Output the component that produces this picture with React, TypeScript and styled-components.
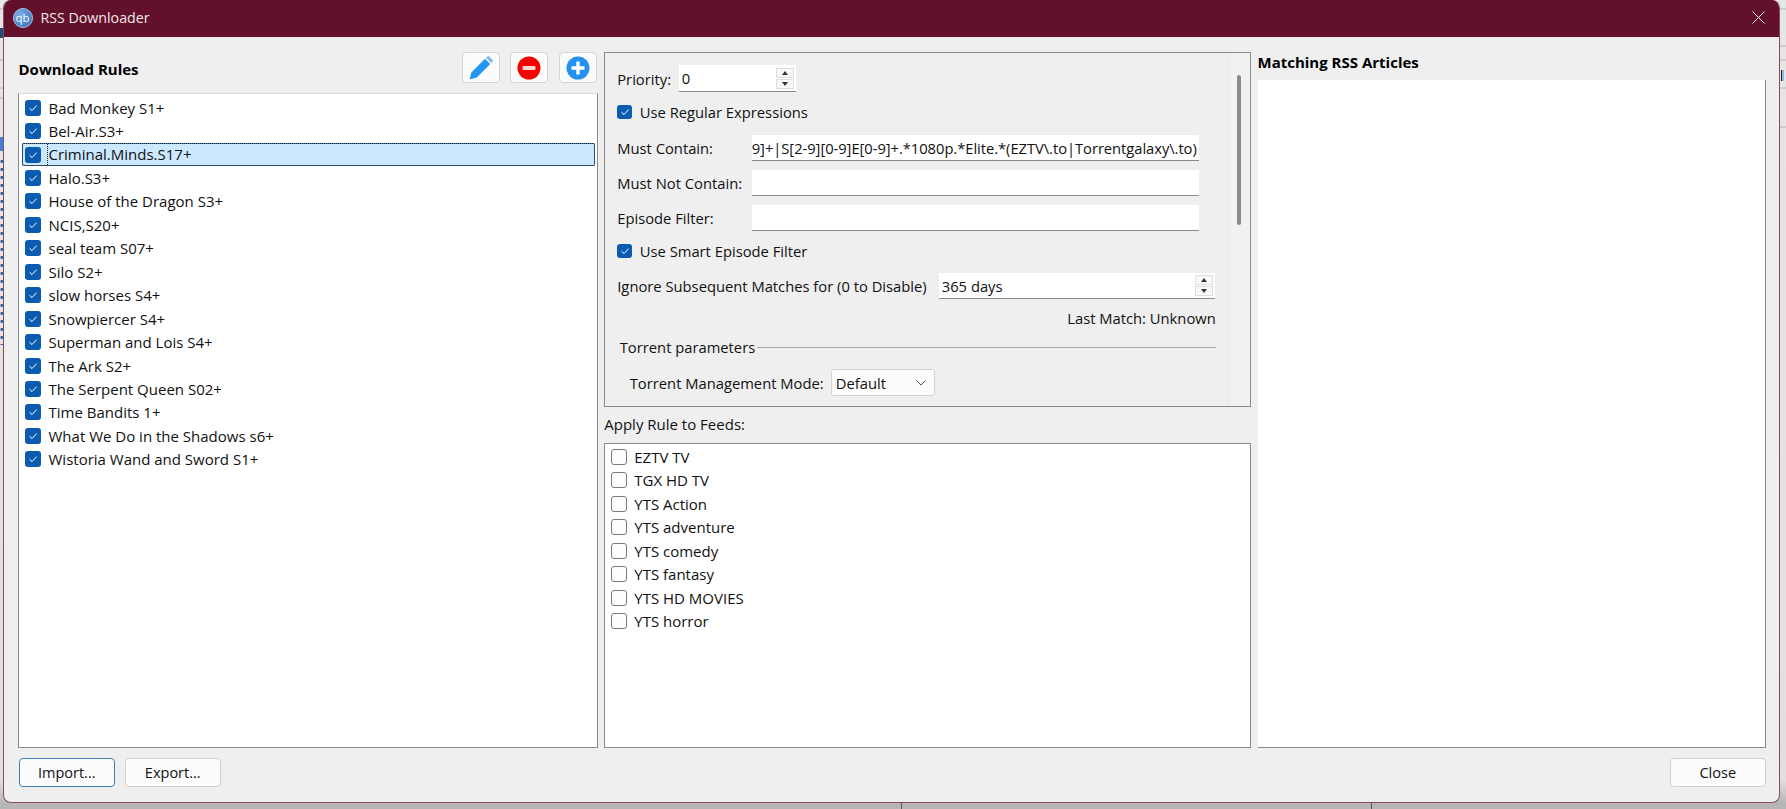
import React from "react";
import styled, { createGlobalStyle } from "styled-components";

const Global = createGlobalStyle`
  html, body { margin: 0; padding: 0; width: 100%; height: 100%; overflow: hidden; }
  body { background: #e4e4e4; font-family: "Open Sans", "Liberation Sans", sans-serif; font-size: 15px; color: #111; }
`;

const Desktop = styled.div`
  position: relative;
  width: 1786px;
  height: 809px;
  overflow: hidden;
  background: linear-gradient(to bottom, #e6e6e6 0, #e0e0e0 780px, #b6b6b6 803px);
`;
const Backdrop = styled.svg`
  position: absolute;
  left: 0;
  top: 0;
`;
const Dialog = styled.div`
  position: absolute;
  left: 3px;
  top: 0;
  width: 1777px;
  height: 803px;
  display: flex;
  flex-direction: column;
  box-sizing: border-box;
  background: #efefef;
  border: 1px solid #8b4a60;
  border-top: none;
  border-radius: 8px;
  overflow: hidden;
`;
const TitleBar = styled.div`
  flex: none;
  height: 37px;
  display: flex;
  align-items: center;
  padding: 0 14px 2px 8.5px;
  box-sizing: border-box;
  background: #63102a;
  color: #f2e8ea;
  font-size: 14.2px;
`;
const Logo = styled.span`
  width: 20px;
  height: 20px;
  margin-right: 8px;
  border-radius: 50%;
  display: flex;
  align-items: center;
  justify-content: center;
  background: radial-gradient(circle at 35% 30%, #7fb0e4, #3d76c0 80%);
  border: 1px solid #a8c4e6;
  box-sizing: border-box;
  color: #f2f6fb;
  font-size: 11.5px;
  line-height: 1;
`;
const TitleText = styled.span`
  flex: 1;
`;
const Body = styled.div`
  flex: 1;
  display: grid;
  grid-template-columns: 580px 646.5px 508px;
  column-gap: 6.75px;
  grid-template-rows: 711px 1fr;
  padding-left: 13.5px;
`;
const Column = styled.div`
  display: flex;
  flex-direction: column;
  min-height: 0;
`;
const RulesHeader = styled.div`
  flex: none;
  height: 56px;
  box-sizing: border-box;
  padding: 15px 1px 0 0;
  display: flex;
  align-items: flex-start;
  gap: 10.5px;
`;
const SectionTitle = styled.span`
  flex: 1;
  font-weight: 700;
  font-size: 15px;
  line-height: 35px;
  padding-left: 1px;
  color: #000;
`;
const IconButton = styled.button`
  width: 38px;
  height: 31px;
  padding: 0;
  display: flex;
  align-items: center;
  justify-content: center;
  background: #fbfbfb;
  border: 1px solid #d4d4d4;
  border-radius: 4px;
`;
const ListBox = styled.div<{ $pad: number; $light?: boolean; $open?: boolean }>`
  flex: 1;
  box-sizing: border-box;
  background: #fff;
  border: 1px solid #8a8a8a;
  border-top-color: ${(p) => (p.$light ? "#dcdcdc" : "#8a8a8a")};
  ${(p) => (p.$open ? "border-top: none; border-left: none;" : "")}
  padding-top: ${(p) => p.$pad}px;
  min-height: 0;
`;
const Row = styled.div<{ $selected?: boolean; $indent: number; $gap: number }>`
  height: 23.45px;
  box-sizing: border-box;
  display: flex;
  align-items: center;
  gap: ${(p) => p.$gap}px;
  margin: 0 1.5px 0 3px;
  padding-left: ${(p) => p.$indent}px;
  border-radius: 2px;
  white-space: nowrap;
  ${(p) =>
    p.$selected
      ? `background:#cce8ff; box-shadow: inset 0 0 0 1px #2f7cbc; outline: 1px dotted #222; outline-offset: -1px;`
      : ""}
`;
const RowLabel = styled.span<{ $focus?: boolean }>`
  ${(p) => (p.$focus ? "border-left: 1px dotted #222; margin-left: -2px; padding-left: 1px; line-height: 21px;" : "")}
`;
const Box = styled.span<{ $checked?: boolean; $size: number }>`
  flex: none;
  width: ${(p) => p.$size}px;
  height: ${(p) => p.$size}px;
  box-sizing: border-box;
  border-radius: 3px;
  display: flex;
  align-items: center;
  justify-content: center;
  background: ${(p) => (p.$checked ? "#0a5cb0" : "#fdfdfd")};
  border: ${(p) => (p.$checked ? "none" : "1px solid #7a7a7a")};
`;
const Options = styled.div`
  flex: none;
  height: 355px;
  margin-top: 15px;
  box-sizing: border-box;
  border: 1px solid #8a8a8a;
  display: flex;
`;
const Form = styled.div`
  flex: 1;
  min-width: 0;
  box-sizing: border-box;
  padding: 12px 12px 0 12px;
  font-size: 14.75px;
`;
const ScrollStrip = styled.div`
  flex: none;
  width: 22px;
  box-sizing: border-box;
  border-left: 1px solid #e6e6e6;
  padding: 22px 0 0 8.5px;
  background: #f1f1f1;
`;
const Thumb = styled.div`
  width: 3.5px;
  height: 150px;
  border-radius: 2px;
  background: #8a8a8a;
`;
const FormRow = styled.div<{ $top?: number; $h: number; $indent?: number; $end?: boolean }>`
  display: flex;
  align-items: center;
  height: ${(p) => p.$h}px;
  margin-top: ${(p) => p.$top ?? 0}px;
  padding-left: ${(p) => p.$indent ?? 0}px;
  justify-content: ${(p) => (p.$end ? "flex-end" : "flex-start")};
  white-space: nowrap;
`;
const Label = styled.span<{ $w: number }>`
  flex: none;
  width: ${(p) => p.$w}px;
`;
const CheckLabel = styled.span`
  margin-left: 8px;
`;
const Field = styled.div<{ $w: number; $end?: boolean }>`
  flex: none;
  width: ${(p) => p.$w}px;
  height: 100%;
  box-sizing: border-box;
  background: #fff;
  border-bottom: 1px solid #8a8a8a;
  display: flex;
  align-items: center;
  justify-content: ${(p) => (p.$end ? "flex-end" : "space-between")};
  overflow: hidden;
  padding: 0 2px 0 3px;
  ${(p) => (p.$end ? "letter-spacing: -0.05px;" : "")}
`;
const Spinner = styled.div`
  display: flex;
  flex-direction: column;
  gap: 1px;
`;
const SpinButton = styled.span<{ $up?: boolean }>`
  width: 18px;
  height: 10px;
  box-sizing: border-box;
  border: 1px solid #dedede;
  background: #f8f8f8;
  display: flex;
  align-items: center;
  justify-content: center;
  &::after {
    content: "";
    border-left: 3px solid transparent;
    border-right: 3px solid transparent;
    ${(p) => (p.$up ? "border-bottom: 4px solid #333;" : "border-top: 4px solid #333;")}
  }
`;
const Section = styled.div`
  display: flex;
  align-items: center;
  flex: 1;
  padding-left: 2.5px;
  &::after {
    content: "";
    flex: 1;
    height: 1px;
    margin-left: 2px;
    background: #a6a6a6;
  }
`;
const Combo = styled.div`
  width: 104px;
  height: 100%;
  box-sizing: border-box;
  background: #fcfcfc;
  border: 1px solid #d2d2d2;
  border-radius: 3px;
  display: flex;
  align-items: center;
  justify-content: space-between;
  padding: 0 8px 0 4px;
`;
const PlainLabel = styled.div`
  flex: none;
  height: 36px;
  display: flex;
  align-items: center;
  padding-bottom: 2px;
  box-sizing: border-box;
`;
const MatchHeading = styled.div`
  flex: none;
  height: 43px;
  box-sizing: border-box;
  padding-top: 14px;
  font-weight: 700;
  line-height: 23px;
  color: #000;
`;
const Footer = styled.div`
  grid-column: 1 / -1;
  display: flex;
  gap: 10.5px;
  padding: 10px 0 0 1.5px;
  align-items: flex-start;
`;
const PushButton = styled.button<{ $focus?: boolean; $push?: boolean }>`
  width: 95.5px;
  height: 29px;
  padding: 0;
  font: inherit;
  font-size: 14.5px;
  color: #111;
  background: #fcfcfc;
  border: 1px solid ${(p) => (p.$focus ? "#3d7fb5" : "#d0d0d0")};
  border-radius: 4px;
  margin-left: ${(p) => (p.$push ? "auto" : "0")};
`;

const rules = [
  "Bad Monkey S1+", "Bel-Air.S3+", "Criminal.Minds.S17+", "Halo.S3+", "House of the Dragon S3+", "NCIS,S20+",
  "seal team S07+", "Silo S2+", "slow horses S4+", "Snowpiercer S4+", "Superman and Lois S4+", "The Ark S2+",
  "The Serpent Queen S02+", "Time Bandits 1+", "What We Do in the Shadows s6+", "Wistoria Wand and Sword S1+",
];
const feeds = ["EZTV TV", "TGX HD TV", "YTS Action", "YTS adventure", "YTS comedy", "YTS fantasy", "YTS HD MOVIES", "YTS horror"];

const Tick = () => (
  <svg width="10" height="10" viewBox="0 0 10 10" fill="none">
    <path d="M1.5 5.2 L4 7.6 L8.6 2.6" stroke="#fff" strokeWidth="1" />
  </svg>
);

const Check = ({ checked, size = 16 }: { checked?: boolean; size?: number }) => (
  <Box $checked={checked} $size={size}>{checked ? <Tick /> : null}</Box>
);

const Spin = () => (
  <Spinner>
    <SpinButton $up />
    <SpinButton />
  </Spinner>
);

export default function App() {
  return (
    <Desktop>
      <Global />
      <Backdrop width="1786" height="809" viewBox="0 0 1786 809">
        <g stroke="#b4b4b4" strokeWidth="1">
          <line x1="0" y1="9" x2="4" y2="9" />
          <line x1="0" y1="60" x2="4" y2="60" />
          <line x1="0" y1="88" x2="4" y2="88" />
          <line x1="0" y1="98" x2="4" y2="98" />
          <line x1="1780" y1="9" x2="1786" y2="9" />
          <line x1="1780" y1="46" x2="1786" y2="46" />
          <line x1="1780" y1="60" x2="1786" y2="60" />
          <line x1="1780" y1="88" x2="1786" y2="88" />
          <line x1="1780" y1="127" x2="1786" y2="127" />
        </g>
        <rect x="0" y="28" width="3" height="10" fill="#1f4e79" />
        <rect x="0" y="137" width="3" height="14" fill="#3f7fd0" />
        <rect x="1781" y="70" width="1" height="11" fill="#222" />
        <rect x="1782" y="70" width="2" height="11" fill="#8dbce8" />
        <line x1="2" y1="160" x2="2" y2="345" stroke="#3c66b4" strokeWidth="3" strokeDasharray="3 5" />
        <rect x="901" y="803" width="1" height="6" fill="#555" />
        <rect x="1371" y="803" width="1" height="6" fill="#555" />
      </Backdrop>
      <Dialog>
        <TitleBar>
          <Logo>qb</Logo>
          <TitleText>RSS Downloader</TitleText>
          <svg width="13" height="13" viewBox="0 0 13 13" stroke="#f5edef" strokeWidth="1" fill="none">
            <path d="M0.5 0.5 L12.5 12.5 M12.5 0.5 L0.5 12.5" />
          </svg>
        </TitleBar>
        <Body>
          <Column>
            <RulesHeader>
              <SectionTitle>Download Rules</SectionTitle>
              <IconButton aria-label="Edit">
                <svg width="26" height="26" viewBox="0 0 26 26">
                  <path d="M1.5 24.5 L3.6 17.2 L17 3.8 L22.2 9 L8.8 22.4 Z" fill="#2196f3" />
                  <path d="M18 2.8 L20.3 0.8 L25.2 5.6 L23.2 8 Z" fill="#7cbcf2" />
                </svg>
              </IconButton>
              <IconButton aria-label="Remove">
                <svg width="24" height="24" viewBox="0 0 24 24">
                  <circle cx="12" cy="12" r="11.5" fill="#f60000" />
                  <rect x="5.5" y="10" width="13" height="4" rx="1" fill="#f6d6d6" />
                </svg>
              </IconButton>
              <IconButton aria-label="Add">
                <svg width="24" height="24" viewBox="0 0 24 24">
                  <circle cx="12" cy="12" r="11.5" fill="#2391f0" />
                  <path d="M12 5.5 V18.5 M5.5 12 H18.5" stroke="#fff" strokeWidth="3.4" />
                </svg>
              </IconButton>
            </RulesHeader>
            <ListBox $light $pad={2}>
              {rules.map((r, i) => (
                <Row key={r} $selected={i === 2} $indent={3} $gap={8}>
                  <Check checked />
                  <RowLabel $focus={i === 2}>{r}</RowLabel>
                </Row>
              ))}
            </ListBox>
          </Column>
          <Column>
            <Options>
              <Form>
                <FormRow $h={27}>
                  <Label $w={61.5}>Priority:</Label>
                  <Field $w={117}>0<Spin /></Field>
                </FormRow>
                <FormRow $top={10} $h={20}>
                  <Check checked size={14.5} />
                  <CheckLabel>Use Regular Expressions</CheckLabel>
                </FormRow>
                <FormRow $top={13} $h={26}>
                  <Label $w={134.5}>Must Contain:</Label>
                  <Field $w={447} $end>9]+|S[2-9][0-9]E[0-9]+.*1080p.*Elite.*(EZTV\.to|Torrentgalaxy\.to)</Field>
                </FormRow>
                <FormRow $top={9} $h={26}>
                  <Label $w={134.5}>Must Not Contain:</Label>
                  <Field $w={447} />
                </FormRow>
                <FormRow $top={9} $h={26}>
                  <Label $w={134.5}>Episode Filter:</Label>
                  <Field $w={447} />
                </FormRow>
                <FormRow $top={10} $h={20}>
                  <Check checked size={14.5} />
                  <CheckLabel>Use Smart Episode Filter</CheckLabel>
                </FormRow>
                <FormRow $top={12} $h={26}>
                  <Label $w={321.5}>Ignore Subsequent Matches for (0 to Disable)</Label>
                  <Field $w={276}>365 days<Spin /></Field>
                </FormRow>
                <FormRow $top={9} $h={20} $end>Last Match: Unknown</FormRow>
                <FormRow $top={9} $h={20}>
                  <Section>Torrent parameters</Section>
                </FormRow>
                <FormRow $top={12} $h={27} $indent={12.5}>
                  <Label $w={201}>Torrent Management Mode:</Label>
                  <Combo>
                    Default
                    <svg width="10" height="6" viewBox="0 0 10 6" fill="none" stroke="#555" strokeWidth="1">
                      <path d="M0.5 0.5 L5 5 L9.5 0.5" />
                    </svg>
                  </Combo>
                </FormRow>
              </Form>
              <ScrollStrip>
                <Thumb />
              </ScrollStrip>
            </Options>
            <PlainLabel>Apply Rule to Feeds:</PlainLabel>
            <ListBox $pad={1.3}>
              {feeds.map((f) => (
                <Row key={f} $indent={3} $gap={7}>
                  <Check />
                  <RowLabel>{f}</RowLabel>
                </Row>
              ))}
            </ListBox>
          </Column>
          <Column>
            <MatchHeading>Matching RSS Articles</MatchHeading>
            <ListBox $pad={0} $open />
          </Column>
          <Footer>
            <PushButton $focus>Import...</PushButton>
            <PushButton>Export...</PushButton>
            <PushButton $push>Close</PushButton>
          </Footer>
        </Body>
      </Dialog>
    </Desktop>
  );
}
